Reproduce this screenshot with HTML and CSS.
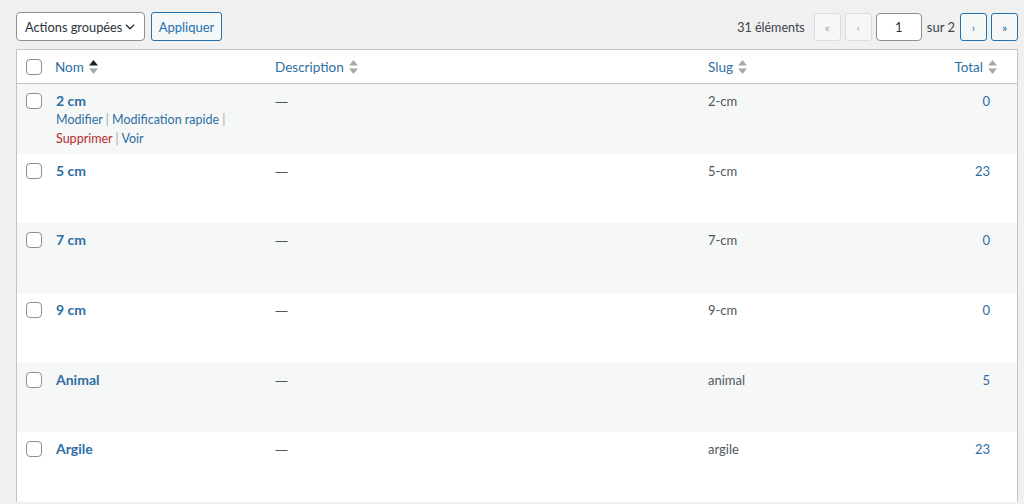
FILE: index.html
```html
<!DOCTYPE html>
<html lang="fr">
<head>
<meta charset="utf-8">
<title>Étiquettes</title>
<link rel="stylesheet" href="styles.css">
</head>
<body>
<div class="wrap">
  <div class="tablenav">
    <div class="bulk">
      <div class="select">
        <span>Actions groupées</span>
        <svg class="chev" width="10" height="6" viewBox="0 0 10 6"><path d="M1 0.8 L5 4.8 L9 0.8" fill="none" stroke="#2c3338" stroke-width="1.5"/></svg>
      </div>
      <div class="btn">Appliquer</div>
    </div>
    <div class="pages">
      <span class="count">31 éléments</span>
      <span class="pbtn disabled">«</span>
      <span class="pbtn disabled">‹</span>
      <span class="pinput">1</span>
      <span class="sur">sur 2</span>
      <span class="pbtn active">›</span>
      <span class="pbtn active">»</span>
    </div>
  </div>

  <table class="list">
    <colgroup>
      <col class="c-cb"><col class="c-name"><col class="c-desc"><col class="c-slug"><col class="c-total">
    </colgroup>
    <thead>
      <tr>
        <th class="cb"><span class="box"></span></th>
        <th><span class="sort">Nom <svg class="arr" width="9" height="14" viewBox="0 0 9 14"><path d="M4.5 0 L9 5.5 L0 5.5Z" fill="#1d2327"/><path d="M0 8.5 L9 8.5 L4.5 14Z" fill="#a7aaad"/></svg></span></th>
        <th><span class="sort">Description <svg class="arr" width="9" height="14" viewBox="0 0 9 14"><path d="M4.5 0 L9 5.5 L0 5.5Z" fill="#a7aaad"/><path d="M0 8.5 L9 8.5 L4.5 14Z" fill="#a7aaad"/></svg></span></th>
        <th><span class="sort">Slug <svg class="arr" width="9" height="14" viewBox="0 0 9 14"><path d="M4.5 0 L9 5.5 L0 5.5Z" fill="#a7aaad"/><path d="M0 8.5 L9 8.5 L4.5 14Z" fill="#a7aaad"/></svg></span></th>
        <th class="num-h"><span class="sort">Total <svg class="arr" width="9" height="14" viewBox="0 0 9 14"><path d="M4.5 0 L9 5.5 L0 5.5Z" fill="#a7aaad"/><path d="M0 8.5 L9 8.5 L4.5 14Z" fill="#a7aaad"/></svg></span></th>
      </tr>
    </thead>
    <tbody>
      <tr class="alt">
        <td class="cb"><span class="box"></span></td>
        <td><a class="title">2 cm</a>
          <div class="actions"><a>Modifier</a> <span class="sep">|</span> <a>Modification rapide</a> <span class="sep">|</span> <a class="del">Supprimer</a> <span class="sep">|</span> <a>Voir</a></div>
        </td>
        <td class="dash">—</td>
        <td class="slug">2-cm</td>
        <td class="num"><a>0</a></td>
      </tr>
      <tr>
        <td class="cb"><span class="box"></span></td>
        <td><a class="title">5 cm</a></td>
        <td class="dash">—</td>
        <td class="slug">5-cm</td>
        <td class="num"><a>23</a></td>
      </tr>
      <tr class="alt">
        <td class="cb"><span class="box"></span></td>
        <td><a class="title">7 cm</a></td>
        <td class="dash">—</td>
        <td class="slug">7-cm</td>
        <td class="num"><a>0</a></td>
      </tr>
      <tr>
        <td class="cb"><span class="box"></span></td>
        <td><a class="title">9 cm</a></td>
        <td class="dash">—</td>
        <td class="slug">9-cm</td>
        <td class="num"><a>0</a></td>
      </tr>
      <tr class="alt">
        <td class="cb"><span class="box"></span></td>
        <td><a class="title">Animal</a></td>
        <td class="dash">—</td>
        <td class="slug">animal</td>
        <td class="num"><a>5</a></td>
      </tr>
      <tr>
        <td class="cb"><span class="box"></span></td>
        <td><a class="title">Argile</a></td>
        <td class="dash">—</td>
        <td class="slug">argile</td>
        <td class="num"><a>23</a></td>
      </tr>
    </tbody>
  </table>
</div>
</body>
</html>
```

FILE: styles.css
```css
* { box-sizing: border-box; }
html, body { margin: 0; padding: 0; }
body {
  background: #f0f0f1;
  font-family: Lato, "Noto Sans", sans-serif;
  font-size: 13px;
  color: #3c434a;
}
.wrap { padding: 12px 6px 0 16px; }

.tablenav {
  display: flex;
  justify-content: space-between;
  align-items: center;
  height: 29px;
  margin-bottom: 8px;
}
.bulk { display: flex; gap: 6px; }
.select {
  width: 129px;
  height: 29px;
  display: flex;
  align-items: center;
  justify-content: space-between;
  padding: 0 9px 0 8px;
  background: #fff;
  border: 1px solid #8c8f94;
  border-radius: 4px;
  font-size: 12.8px;
  color: #2c3338;
  white-space: nowrap;
}
.chev { flex-shrink: 0; display: block; }
.btn {
  width: 71px;
  height: 29px;
  display: flex;
  align-items: center;
  justify-content: center;
  border: 1px solid #2271b1;
  border-radius: 3px;
  background: #f6f7f7;
  color: #2271b1;
  font-size: 13px;
}
.pages { display: flex; align-items: center; gap: 4px; padding-top: 1px; white-space: nowrap; }
.count { margin-right: 5px; color: #3c434a; font-size: 12.5px; }
.pbtn {
  width: 27px;
  height: 28px;
  display: flex;
  align-items: center;
  justify-content: center;
  border-radius: 3px;
  font-size: 12px;
}
.pbtn.disabled { border: 1px solid #dcdcde; background: #f6f7f7; color: #a7aaad; }
.pbtn.active { border: 1px solid #2271b1; background: #f6f7f7; color: #2271b1; }
.pinput {
  width: 46px;
  height: 28px;
  display: flex;
  align-items: center;
  justify-content: center;
  background: #fff;
  border: 1px solid #8c8f94;
  border-radius: 4px;
  color: #2c3338;
}
.sur { margin: 0 1px; font-size: 13px; }

.list {
  width: 1002px;
  border-collapse: separate;
  border-spacing: 0;
  table-layout: fixed;
  background: #fff;
  border: 1px solid #c3c4c7;
  border-bottom: 0;
}
.c-cb { width: 30px; }
.c-name { width: 220px; }
.c-desc { width: 433px; }
.c-slug { width: 217px; }
.c-total { width: 100px; }

th {
  text-align: left;
  font-weight: 400;
  height: 34px;
  padding: 0 8px;
  border-bottom: 1px solid #c3c4c7;
  color: #2c6ea3;
  font-size: 13.5px;
  vertical-align: middle;
}
th.num-h { text-align: right; padding-right: 20px; }
.sort { display: inline-flex; align-items: center; gap: 5px; }
.arr { display: block; }

td {
  vertical-align: top;
  padding: 8px 8px 0 9px;
  height: 69.7px;
  line-height: 18px;
}
tr.alt td { background: #f6f7f7; }
td.cb, th.cb { padding: 0; }
td.cb { padding-top: 9px; }
.box {
  display: block;
  width: 16px;
  height: 16px;
  margin-left: 9px;
  border: 1px solid #8c8f94;
  border-radius: 4px;
  background: #fff;
}
.title { color: #2c6ea3; font-weight: 700; font-size: 14px; }
.actions { color: #2c6ea3; font-size: 12.5px; line-height: 19px; }
.actions a { color: #2c6ea3; }
.actions .sep { color: #a7aaad; }
.actions .del { color: #b32d2e; }
.dash { color: #50575e; font-family: "Noto Sans", sans-serif; padding-left: 8px; }
.slug { color: #50575e; font-size: 13px; padding-left: 8px; }
td.num { text-align: right; padding-right: 27px; font-size: 13px; }
td.num a { color: #2c6ea3; }
```
